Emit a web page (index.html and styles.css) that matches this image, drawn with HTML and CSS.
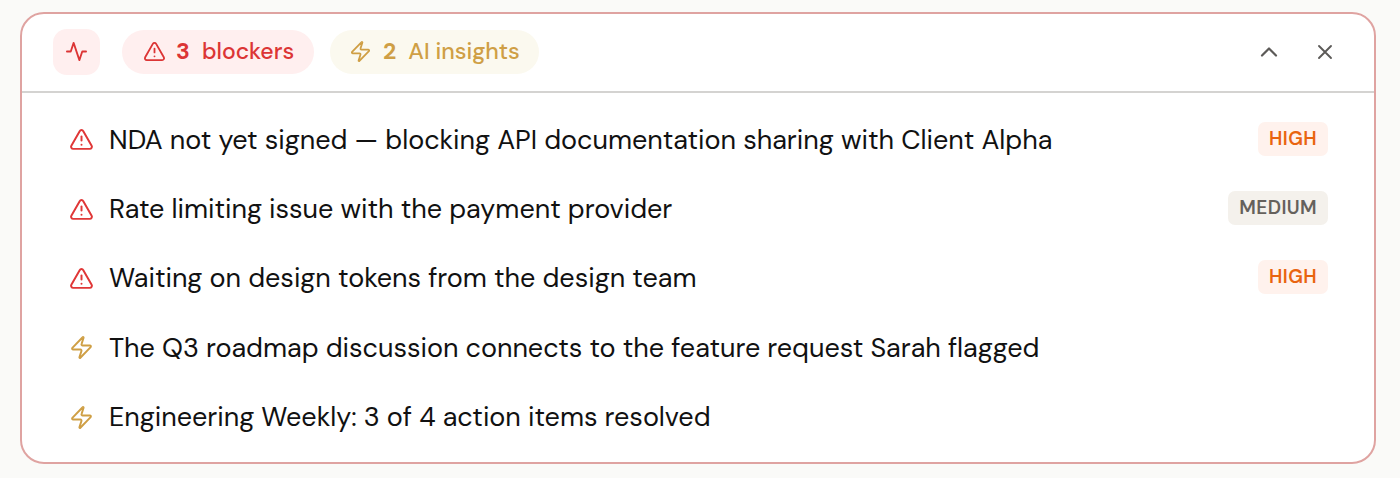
FILE: index.html
```html
<!DOCTYPE html>
<html lang="en">
<head>
    <meta charset="UTF-8">
    <meta name="viewport" content="width=device-width, initial-scale=1.0">
    <title>Project Pulse</title>
    <link rel="stylesheet" href="styles.css">
</head>
<body>
    <!-- Shared icon shapes -->
    <svg class="icon-defs" width="0" height="0">
        <symbol id="warning" viewBox="0 0 24 24">
            <path d="m21.73 18-8-14a2 2 0 0 0-3.48 0l-8 14A2 2 0 0 0 4 21h16a2 2 0 0 0 1.73-3"/>
            <path d="M12 9v4"/>
            <path d="M12 17h.01"/>
        </symbol>
        <symbol id="bolt" viewBox="0 0 24 24">
            <path d="M4 14a1 1 0 0 1-.78-1.63l9.9-10.2a.5.5 0 0 1 .86.46l-1.92 6.02A1 1 0 0 0 13 10h7a1 1 0 0 1 .78 1.63l-9.9 10.2a.5.5 0 0 1-.86-.46l1.92-6.02A1 1 0 0 0 11 14z"/>
        </symbol>
    </svg>

    <section class="panel">
        <header class="panel-header">
            <div class="pulse">
                <svg class="icon" viewBox="0 0 24 24"><path d="M22 12h-4l-3 9L9 3l-3 9H2"/></svg>
            </div>
            <div class="pill pill-blockers">
                <svg class="icon"><use href="#warning"/></svg>
                <span class="count">3</span>
                <span class="pill-label">blockers</span>
            </div>
            <div class="pill pill-insights">
                <svg class="icon"><use href="#bolt"/></svg>
                <span class="count">2</span>
                <span class="pill-label">AI insights</span>
            </div>
            <div class="actions">
                <button class="action" aria-label="Collapse"><svg class="icon icon-chevron" viewBox="0 0 24 24"><path d="m18 15-6-6-6 6"/></svg></button>
                <button class="action" aria-label="Close"><svg class="icon" viewBox="0 0 24 24"><path d="M18 6 6 18M6 6l12 12"/></svg></button>
            </div>
        </header>

        <ul class="items">
            <li class="item">
                <svg class="icon icon-blocker"><use href="#warning"/></svg>
                <span class="item-text">NDA not yet signed — blocking API documentation sharing with Client Alpha</span>
                <span class="tag tag-high">HIGH</span>
            </li>
            <li class="item">
                <svg class="icon icon-blocker"><use href="#warning"/></svg>
                <span class="item-text">Rate limiting issue with the payment provider</span>
                <span class="tag tag-medium">MEDIUM</span>
            </li>
            <li class="item">
                <svg class="icon icon-blocker"><use href="#warning"/></svg>
                <span class="item-text">Waiting on design tokens from the design team</span>
                <span class="tag tag-high">HIGH</span>
            </li>
            <li class="item">
                <svg class="icon icon-insight"><use href="#bolt"/></svg>
                <span class="item-text">The Q3 roadmap discussion connects to the feature request Sarah flagged</span>
            </li>
            <li class="item">
                <svg class="icon icon-insight"><use href="#bolt"/></svg>
                <span class="item-text">Engineering Weekly: 3 of 4 action items resolved</span>
            </li>
        </ul>
    </section>
</body>
</html>
```

FILE: styles.css
```css
* {
    margin: 0;
    padding: 0;
    box-sizing: border-box;
}

body {
    height: 478px;
    padding: 12px 24px 14px 20px;
    background: #fafaf8;
    font-family: "DM Sans", "Open Sans", sans-serif;
    overflow: hidden;
}

.icon-defs {
    position: absolute;
}

.icon {
    display: block;
    flex: none;
    width: 24px;
    height: 24px;
    fill: none;
    stroke: currentColor;
    stroke-width: 1.9;
    stroke-linecap: round;
    stroke-linejoin: round;
}

.panel {
    height: 452px;
    background: #fff;
    border: 2px solid #dfa3a1;
    border-radius: 24px;
    overflow: hidden;
}

.panel-header {
    display: flex;
    align-items: center;
    height: 79px;
    padding: 0 29px 2px 31px;
    border-bottom: 2px solid #d4d3d1;
}

.pulse {
    display: flex;
    align-items: center;
    justify-content: center;
    width: 47px;
    height: 46px;
    margin-right: 22px;
    border-radius: 14px;
    background: #ffefef;
    color: #dc3535;
}

.pulse .icon {
    width: 23px;
    height: 23px;
}

.pill {
    display: flex;
    align-items: center;
    height: 44px;
    margin-right: 16px;
    padding: 0 20px;
    border-radius: 22px;
    font-size: 23px;
    font-weight: 500;
    line-height: 30px;
    white-space: nowrap;
}

.pill .icon {
    width: 23px;
    height: 23px;
}

.count,
.pill-label {
    padding-bottom: 2px;
}

.count {
    margin: 0 12px 0 10px;
    font-weight: 700;
}

.pill-blockers {
    width: 192px;
    padding-left: 21px;
    background: #ffefef;
    color: #dc3535;
}

.pill-insights {
    width: 209px;
    padding-left: 19px;
    background: #fbf9ef;
    color: #cf9f45;
}

.pill-insights .count {
    margin-left: 11px;
}

.actions {
    display: flex;
    gap: 16px;
    margin-left: auto;
}

.action {
    display: flex;
    align-items: center;
    justify-content: center;
    width: 40px;
    height: 40px;
    border: none;
    background: none;
    color: #5c5a58;
    cursor: pointer;
}

.icon-chevron {
    width: 28px;
    height: 28px;
}

.items {
    padding: 12px 46px 0 47px;
    list-style: none;
}

.item {
    display: flex;
    align-items: center;
    height: 69.4px;
}

.item .icon {
    width: 25px;
    height: 25px;
}

.item-text {
    margin-left: 15px;
    color: #111;
    font-size: 27px;
    letter-spacing: -0.03px;
    line-height: 40px;
    white-space: nowrap;
}

.icon-blocker {
    color: #e03737;
}

.icon-insight {
    color: #cf9f45;
}

.tag {
    margin: 0 0 2px auto;
    height: 34px;
    padding: 0 11px;
    border-radius: 7px;
    font-size: 19px;
    font-weight: 600;
    letter-spacing: 0.4px;
    line-height: 33px;
}

.tag-high {
    background: #fff2ed;
    color: #e9640f;
}

.tag-medium {
    background: #f4f1ec;
    color: #65615c;
}
```
